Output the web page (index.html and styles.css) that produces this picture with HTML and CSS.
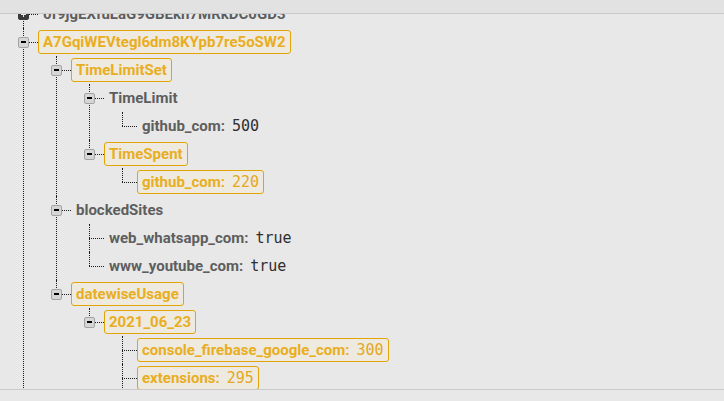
FILE: index.html
```html
<!DOCTYPE html>
<html>
<head>
<meta charset="utf-8">
<link rel="stylesheet" href="styles.css">
</head>
<body>
<div class="topbar"></div>
<div class="viewport">
  <ul class="tree">
    <li>
      <div class="row"><span class="icon dark"></span><span class="label">0f9jgEXfuLaG9GBEkh7MRkDC0GD3</span></div>
    </li>
    <li>
      <div class="row"><span class="icon"></span><span class="label changed">A7GqiWEVtegl6dm8KYpb7re5oSW2</span></div>
      <ul class="children">
        <li>
          <div class="row"><span class="icon"></span><span class="label changed">TimeLimitSet</span></div>
          <ul class="children">
            <li>
              <div class="row"><span class="icon"></span><span class="label">TimeLimit</span></div>
              <ul class="children">
                <li><div class="row leaf"><span class="label">github_com:<span class="value">500</span></span></div></li>
              </ul>
            </li>
            <li>
              <div class="row"><span class="icon"></span><span class="label changed">TimeSpent</span></div>
              <ul class="children">
                <li><div class="row leaf"><span class="label changed">github_com:<span class="value">220</span></span></div></li>
              </ul>
            </li>
          </ul>
        </li>
        <li>
          <div class="row"><span class="icon"></span><span class="label">blockedSites</span></div>
          <ul class="children">
            <li><div class="row leaf"><span class="label">web_whatsapp_com:<span class="value">true</span></span></div></li>
            <li><div class="row leaf"><span class="label">www_youtube_com:<span class="value">true</span></span></div></li>
          </ul>
        </li>
        <li>
          <div class="row"><span class="icon"></span><span class="label changed">datewiseUsage</span></div>
          <ul class="children">
            <li>
              <div class="row"><span class="icon"></span><span class="label changed">2021_06_23</span></div>
              <ul class="children">
                <li><div class="row leaf"><span class="label changed">console_firebase_google_com:<span class="value">300</span></span></div></li>
                <li><div class="row leaf"><span class="label changed">extensions:<span class="value">295</span></span></div></li>
                <li><div class="row leaf"></div></li>
              </ul>
            </li>
          </ul>
        </li>
      </ul>
    </li>
    <li>
      <div class="row"></div>
    </li>
  </ul>
</div>
<div class="footer"></div>
</body>
</html>
```
FILE: styles.css
```css
html, body {
  margin: 0;
  padding: 0;
}
body {
  width: 724px;
  height: 401px;
  overflow: hidden;
  background: #e8e8e8;
  font-family: Roboto, "Noto Sans", sans-serif;
  display: flex;
  flex-direction: column;
}
.topbar {
  flex: none;
  height: 13px;
  background: #e2e2e2;
  border-bottom: 1px solid #c9c9c9;
}
.viewport {
  flex: none;
  height: 375px;
  overflow: hidden;
}
.footer {
  flex: 1;
  border-top: 1px solid #cacaca;
}
.tree, .children {
  list-style: none;
  margin: 0;
  padding: 0;
}
.tree {
  margin: -14px 0 0 18px;
}
.children {
  padding-left: 33px;
}
li {
  position: relative;
}
li::before {
  content: "";
  position: absolute;
  left: 5px;
  top: 0;
  bottom: 0;
  border-left: 1px dotted #1a1a1a;
}
li:last-child::before {
  bottom: auto;
  height: 14px;
}
li::after {
  content: "";
  position: absolute;
  left: 5px;
  top: 14px;
  width: 15px;
  border-top: 1px dotted #1a1a1a;
}
.row {
  height: 28px;
  display: flex;
  align-items: center;
}
.row.leaf {
  padding-left: 20px;
}
.icon {
  position: relative;
  z-index: 1;
  flex: none;
  width: 11px;
  height: 11px;
  box-sizing: border-box;
  margin-right: 9px;
  border: 1px solid #a3a3a3;
  border-radius: 2px;
  background: #d6d6d6;
  display: flex;
  align-items: center;
  justify-content: center;
}
.icon::before {
  content: "";
  width: 5px;
  height: 2px;
  background: #000;
}
.icon.dark {
  background: #3a3a3a;
  border-color: #3a3a3a;
}
.icon.dark::before {
  width: 5px;
  height: 1px;
  background: #e8e8e8;
}
.icon.dark::after {
  content: "";
  position: absolute;
  left: 4px;
  top: 2px;
  width: 1px;
  height: 5px;
  background: #e8e8e8;
}
.label {
  display: inline-flex;
  align-items: center;
  height: 24px;
  box-sizing: border-box;
  padding: 0 4px;
  border: 1px solid transparent;
  border-radius: 3px;
  font-size: 15px;
  font-weight: 700;
  color: #5e5e5e;
  white-space: nowrap;
}
.label.changed {
  border-color: #e2a503;
  background: #eeeae0;
  color: #e9ae1f;
}
.value {
  font-family: "DejaVu Sans Mono", monospace;
  font-weight: 400;
  font-size: 15px;
  color: #2e2e2e;
  margin-left: 7px;
}
.label.changed .value {
  color: #e3a821;
}
```
